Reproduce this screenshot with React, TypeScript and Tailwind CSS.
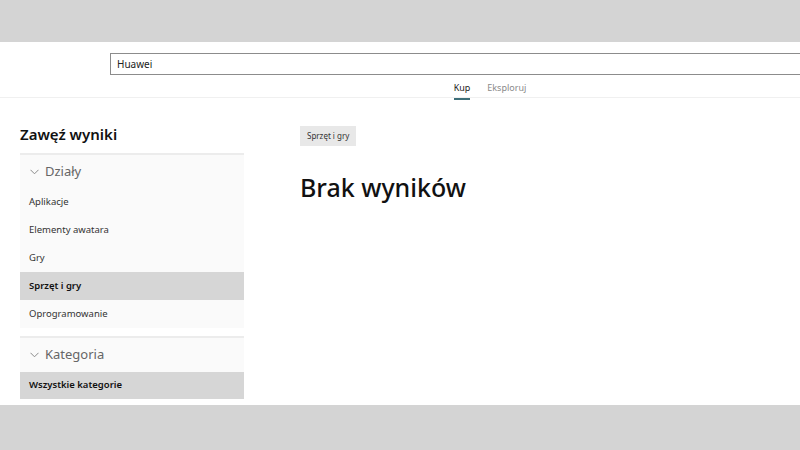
import React from "react";

const font = { fontFamily: '"Noto Sans", "Open Sans", sans-serif' };

function Chevron() {
  return (
    <svg width="9" height="6" viewBox="0 0 9 6" className="shrink-0">
      <path d="M0.5 0.8 L4.5 4.8 L8.5 0.8" fill="none" stroke="#8a8a8a" strokeWidth="1" />
    </svg>
  );
}

const dzialy = ["Aplikacje", "Elementy awatara", "Gry", "Sprzęt i gry", "Oprogramowanie"];

export default function App() {
  return (
    <div className="w-[800px] h-[450px] bg-[#d4d4d4] flex flex-col overflow-hidden text-[#1a1a1a]" style={font}>
      <div className="h-[42px] shrink-0" />

      <div className="h-[363px] shrink-0 bg-white flex flex-col">
        {/* Header */}
        <header className="h-[56px] shrink-0 border-b border-[#f0f0f0] flex flex-col">
          <div className="pt-[11px] pl-[110px]">
            <div className="h-[22px] border border-[#8c8c8c] border-r-0 flex items-center px-[6px] text-[10px] text-[#222]">
              Huawei
            </div>
          </div>
          <nav className="flex justify-center gap-[17px] pl-[180px] mt-[6px] text-[9px]">
            <div className="flex flex-col items-center">
              <span className="text-[#222] leading-[14px]">Kup</span>
              <span className="mt-[3px] h-[2px] w-[16px] bg-[#3c6e78]" />
            </div>
            <span className="text-[#8a8a8a] leading-[14px]">Eksploruj</span>
          </nav>
        </header>

        {/* Content */}
        <div className="flex flex-1 min-h-0">
          <aside className="w-[224px] ml-[20px] shrink-0 flex flex-col">
            <h2 className="text-[15px] font-semibold leading-[20px] mt-[26px] mb-[9px] text-[#111]">Zawęź wyniki</h2>

            <div className="border-t-2 border-[#ececec] bg-[#fafafa]">
              <div className="h-[33px] flex items-center gap-[6px] pl-[10px] text-[13px] text-[#666]">
                <Chevron />
                <span>Działy</span>
              </div>
              {dzialy.map((d) => (
                <div
                  key={d}
                  className={
                    d === "Sprzęt i gry"
                      ? "h-[28px] flex items-center pl-[9px] text-[9.5px] font-semibold bg-[#d6d6d6] text-[#111]"
                      : "h-[28px] flex items-center pl-[9px] text-[9.5px] text-[#333]"
                  }
                >
                  {d}
                </div>
              ))}
            </div>

            <div className="mt-[8px] border-t-2 border-[#ececec] bg-[#fafafa]">
              <div className="h-[34px] flex items-center gap-[6px] pl-[10px] text-[13px] text-[#666]">
                <Chevron />
                <span>Kategoria</span>
              </div>
              <div className="h-[27px] flex items-center pl-[9px] text-[9.5px] font-semibold bg-[#d6d6d6] text-[#111]">
                Wszystkie kategorie
              </div>
            </div>
          </aside>

          <main className="flex-1 pl-[56px] pt-[23px]">
            <div className="inline-flex items-center h-[20px] px-[7px] bg-[#e8e8e8] text-[8px] text-[#333]">
              Sprzęt i gry
            </div>
            <h1 className="mt-[25px] text-[25px] font-medium leading-[32px] text-[#111]">Brak wyników</h1>
          </main>
        </div>
      </div>

      <div className="flex-1" />
    </div>
  );
}
